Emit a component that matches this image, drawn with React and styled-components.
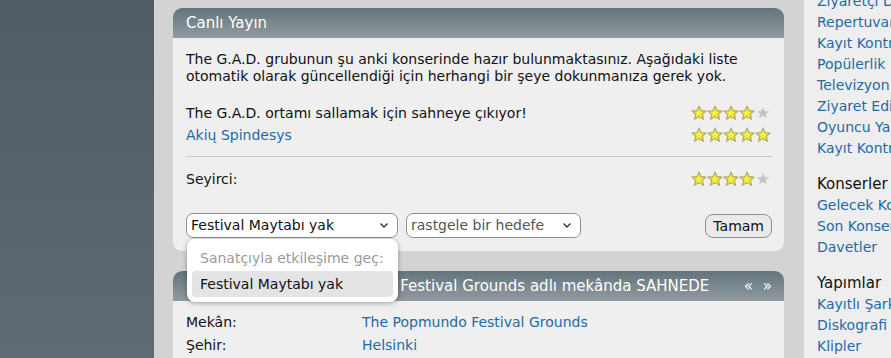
import React from "react";
import styled, { createGlobalStyle } from "styled-components";

const Global = createGlobalStyle`
  html, body { margin: 0; padding: 0; }
  body { font-family: "DejaVu Sans", Verdana, sans-serif; font-size: 14px; color: #111; }
`;

const Page = styled.div`
  display: flex;
  width: 891px;
  height: 358px;
  overflow: hidden;
`;

const Backdrop = styled.div`
  width: 154px;
  flex: none;
  background: linear-gradient(#4f5c66, #5e6b75);
`;

const Column = styled.div`
  width: 650px;
  flex: none;
  background: #d3d3d3;
  padding: 8px 20px 0 19px;
  box-sizing: border-box;
  position: relative;
`;

const Box = styled.section`
  background: #efefef;
  border-radius: 9px;
  margin-bottom: 20px;
  position: relative;
`;

const BoxHeader = styled.div`
  height: 30px;
  border-radius: 9px 9px 0 0;
  background: linear-gradient(#64747c, #909ba0);
  color: #fff;
  font-size: 15px;
  display: flex;
  align-items: center;
  justify-content: space-between;
  padding: 0 12px 0 13px;
  white-space: nowrap;
  overflow: hidden;
`;

const Arrows = styled.span`
  display: flex;
  gap: 10px;
  font-size: 15px;
`;

const BoxBody = styled.div`
  padding: ${(p) => p.$top ?? 13}px 12px 13px 13px;
  line-height: 17px;
`;

const Para = styled.p`
  margin: 0 0 17px 0;
`;

const RatingRow = styled.div`
  height: 22px;
  display: flex;
  align-items: center;
  justify-content: space-between;
`;

const Link = styled.a`
  color: #1d6aa6;
  text-decoration: none;
`;

const Rule = styled.hr`
  border: none;
  border-top: 1px solid #c8c8c8;
  margin: 10px 0 11px 0;
`;

const FormRow = styled.div`
  margin-top: 23px;
  display: flex;
  align-items: center;
  gap: 8px;
  position: relative;
`;

const Select = styled.div`
  width: ${(p) => p.$w}px;
  height: 25px;
  box-sizing: border-box;
  border: 1px solid #8f8f8f;
  border-radius: 7px;
  background: #fff;
  display: flex;
  align-items: center;
  justify-content: space-between;
  padding: 0 8px 0 4px;
  font-size: 14px;
  color: ${(p) => (p.$muted ? "#555" : "#111")};
`;

const Button = styled.button`
  margin-left: auto;
  height: 24px;
  padding: 0 7px;
  border: 1px solid #8f8f8f;
  border-radius: 8px;
  background: #eaeaea;
  font-family: inherit;
  font-size: 14px;
  color: #111;
`;

const Popup = styled.div`
  position: absolute;
  left: 1px;
  top: 26px;
  width: 211px;
  box-sizing: border-box;
  background: #fff;
  border-radius: 8px;
  box-shadow: 0 1px 5px rgba(0, 0, 0, 0.35);
  padding: 6px 5px 5px 5px;
  font-size: 14px;
  z-index: 5;
`;

const PopupOption = styled.div`
  height: 26px;
  display: flex;
  align-items: center;
  padding-left: 8px;
  border-radius: 4px;
  color: ${(p) => (p.$disabled ? "#9a9a9a" : "#111")};
  background: ${(p) => (p.$active ? "#e4e4e4" : "transparent")};
`;

const InfoRow = styled.div`
  display: grid;
  grid-template-columns: 176px 1fr;
  height: 23px;
  align-items: center;
`;

const Sidebar = styled.div`
  flex: 1;
  background: #eeeeee;
  padding-left: 13px;
  font-size: 14px;
`;

const SideList = styled.div`
  margin-top: -9px;
  display: flex;
  flex-direction: column;
`;

const SideItem = styled.div`
  height: ${(p) => (p.$head ? 22 : 21)}px;
  line-height: ${(p) => (p.$head ? 22 : 21)}px;
  white-space: nowrap;
  color: ${(p) => (p.$head ? "#111" : "#1d6aa6")};
  margin-top: ${(p) => (p.$head ? 14 : 0)}px;
  font-size: ${(p) => (p.$head ? 15 : 14)}px;
`;

const StarWrap = styled.span`
  display: flex;
  margin-right: 1px;
`;

function Star({ on }) {
  return (
    <svg width="16" height="16" viewBox="0 0 20 20">
      <polygon
        points="10,1.5 12.6,7.2 18.8,7.6 14,11.6 15.6,17.8 10,14.4 4.4,17.8 6,11.6 1.2,7.6 7.4,7.2"
        fill={on ? "#f3ef3a" : "#c4c4c4"}
        stroke={on ? "#b6ad62" : "#c4c4c4"}
        strokeWidth={on ? 1.6 : 0.5}
        strokeLinejoin="round"
        transform={on ? "" : "translate(10 10) scale(0.8) translate(-10 -10)"}
      />
    </svg>
  );
}

function Stars({ n }) {
  return (
    <StarWrap>
      {[0, 1, 2, 3, 4].map((i) => (
        <Star key={i} on={i < n} />
      ))}
    </StarWrap>
  );
}

function Chevron() {
  return (
    <svg width="10" height="7" viewBox="0 0 10 7">
      <path d="M1.5 1.5 L5 5 L8.5 1.5" fill="none" stroke="#333" strokeWidth="1.4" />
    </svg>
  );
}

const sideTop = ["Ziyaretçi Defteri", "Repertuvar", "Kayıt Kontrolü", "Popülerlik", "Televizyon", "Ziyaret Edilenler", "Oyuncu Yardımı", "Kayıt Kontrolü"];

export default function App() {
  return (
    <>
      <Global />
      <Page>
        <Backdrop />
        <Column>
          <Box>
            <BoxHeader>Canlı Yayın</BoxHeader>
            <BoxBody>
              <Para>
                The G.A.D. grubunun şu anki konserinde hazır bulunmaktasınız. Aşağıdaki liste
                otomatik olarak güncellendiği için herhangi bir şeye dokunmanıza gerek yok.
              </Para>
              <RatingRow>
                <span>The G.A.D. ortamı sallamak için sahneye çıkıyor!</span>
                <Stars n={4} />
              </RatingRow>
              <RatingRow>
                <Link href="#">Akių Spindesys</Link>
                <Stars n={5} />
              </RatingRow>
              <Rule />
              <RatingRow>
                <span>Seyirci:</span>
                <Stars n={4} />
              </RatingRow>
              <FormRow>
                <Select $w={212}>
                  <span>Festival Maytabı yak</span>
                  <Chevron />
                </Select>
                <Select $w={175} $muted>
                  <span>rastgele bir hedefe</span>
                  <Chevron />
                </Select>
                <Button>Tamam</Button>
                <Popup>
                  <PopupOption $disabled>Sanatçıyla etkileşime geç:</PopupOption>
                  <PopupOption $active>Festival Maytabı yak</PopupOption>
                </Popup>
              </FormRow>
            </BoxBody>
          </Box>
          <Box>
            <BoxHeader>
              <span>G.A.D. şimdi The Popmundo Festival Grounds adlı mekânda SAHNEDE</span>
              <Arrows>
                <span>«</span>
                <span>»</span>
              </Arrows>
            </BoxHeader>
            <BoxBody $top={10}>
              <InfoRow>
                <span>Mekân:</span>
                <Link href="#">The Popmundo Festival Grounds</Link>
              </InfoRow>
              <InfoRow>
                <span>Şehir:</span>
                <Link href="#">Helsinki</Link>
              </InfoRow>
            </BoxBody>
          </Box>
        </Column>
        <Sidebar>
          <SideList>
            {sideTop.map((t, i) => (
              <SideItem key={i}>{t}</SideItem>
            ))}
            <SideItem $head>Konserler</SideItem>
            <SideItem>Gelecek Konserler</SideItem>
            <SideItem>Son Konserler</SideItem>
            <SideItem>Davetler</SideItem>
            <SideItem $head>Yapımlar</SideItem>
            <SideItem>Kayıtlı Şarkılar</SideItem>
            <SideItem>Diskografi</SideItem>
            <SideItem>Klipler</SideItem>
          </SideList>
        </Sidebar>
      </Page>
    </>
  );
}
